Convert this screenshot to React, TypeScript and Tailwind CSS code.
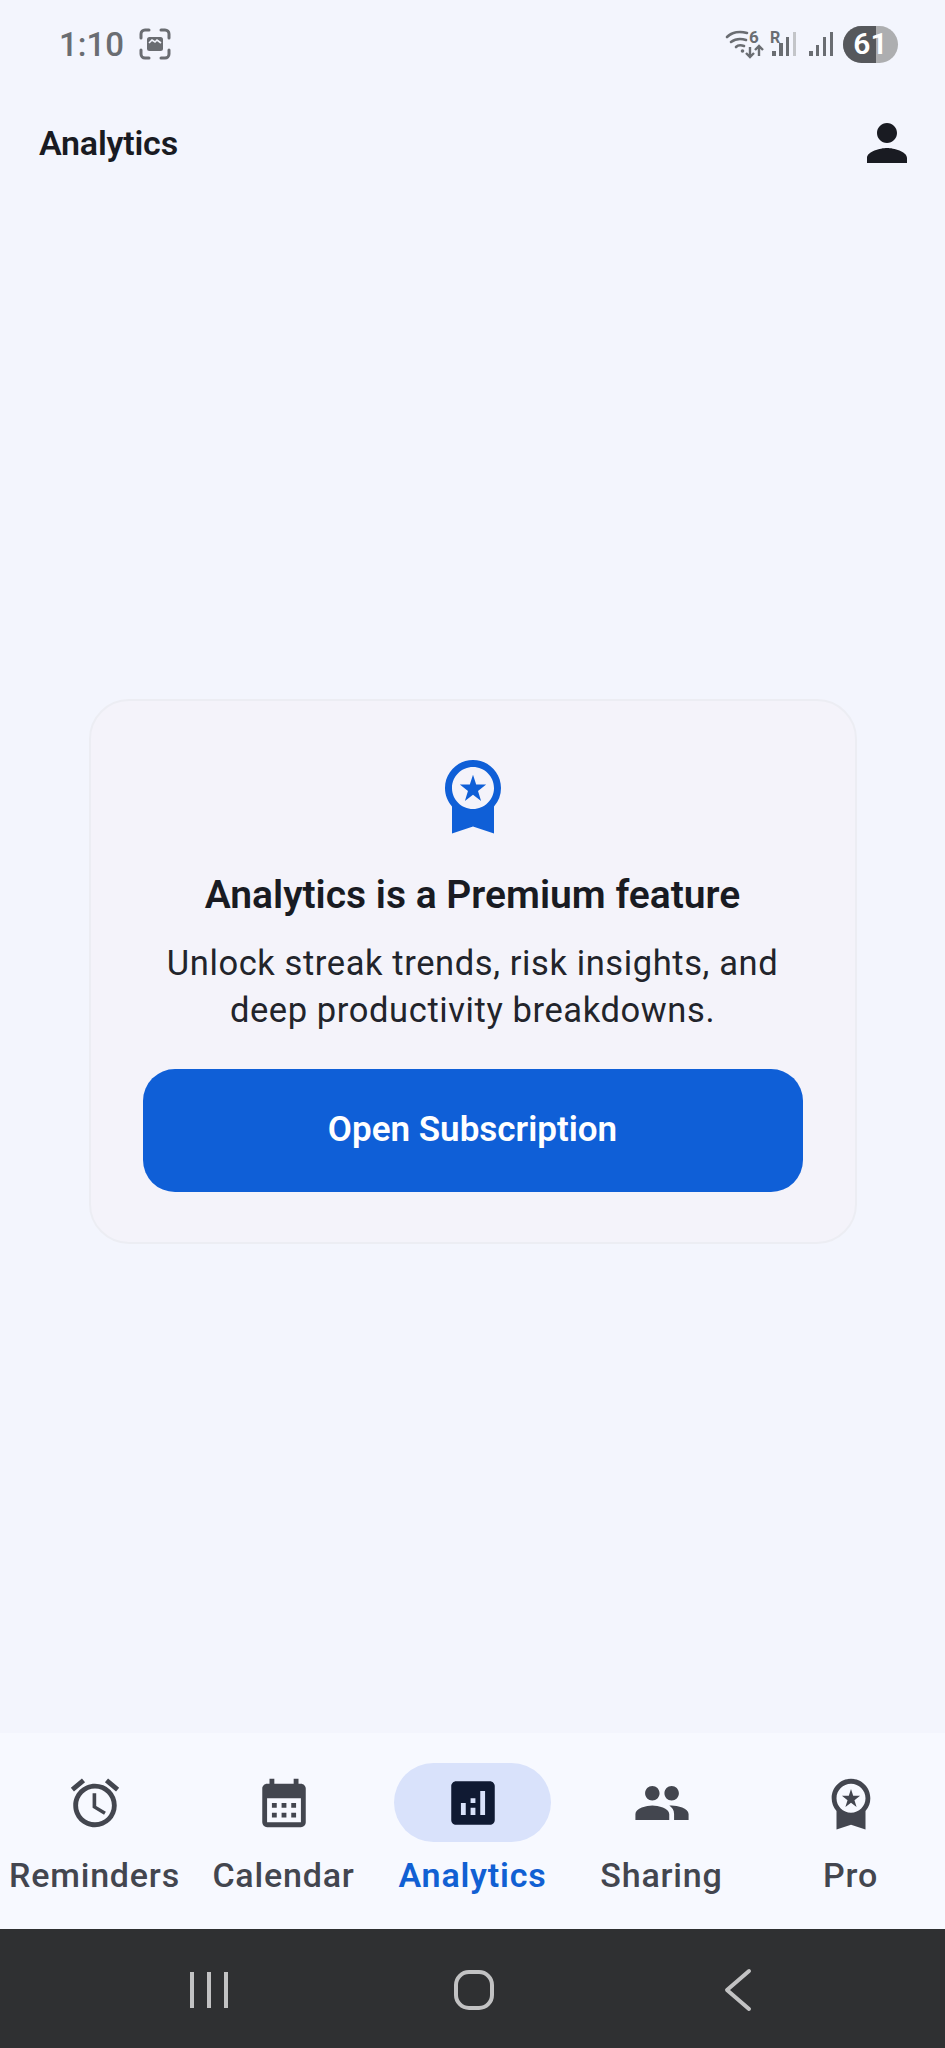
import { MdAccessAlarm, MdAnalytics, MdCalendarMonth, MdPeople, MdPerson, MdWorkspacePremium } from 'react-icons/md';
import type { IconType } from 'react-icons';

interface NavItemProps {
  label: string;
  icon: IconType;
  active?: boolean;
}

function NavItem({ label, icon: Icon, active }: NavItemProps) {
  return (
    <div className="flex flex-col items-center">
      <div className={`flex h-[79px] w-[157px] items-center justify-center rounded-full ${active ? 'bg-[#d9e2fb]' : ''}`}>
        <Icon className={`h-[58px] w-[58px] ${active ? 'text-[#101a33]' : 'text-[#43464f]'}`} />
      </div>
      <span
        className={`mt-[9px] whitespace-nowrap text-[34px] leading-[48px] tracking-[0.8px] ${
          active ? 'font-semibold text-[#1160d3]' : 'font-medium text-[#43464f]'
        }`}
      >
        {label}
      </span>
    </div>
  );
}

function ScreenshotIcon() {
  return (
    <svg width="32" height="32" viewBox="0 0 32 32" fill="none" className="text-[#6a6d72]">
      <path
        d="M2 10V6a4 4 0 0 1 4-4h4M22 2h4a4 4 0 0 1 4 4v4M30 22v4a4 4 0 0 1-4 4h-4M10 30H6a4 4 0 0 1-4-4v-4"
        stroke="currentColor"
        strokeWidth="3"
        strokeLinecap="round"
      />
      <rect x="8" y="9" width="16" height="14" rx="2.5" fill="currentColor" />
      <path d="M10 15l3-3 3 2 2-2 4 3" stroke="#f3f5fd" strokeWidth="1.6" fill="none" />
    </svg>
  );
}

function StatusIcons() {
  return (
    <div className="flex items-center">
      <svg width="115" height="48" viewBox="0 0 115 48" fill="none" className="text-[#6a6d72]">
        <path d="M5 17C10 12 18 11 25 13M9 22C13 19 18 18 24 20M14 27C16 25 19 25 22 26" stroke="currentColor" strokeWidth="2.6" strokeLinecap="round" />
        <circle cx="20.5" cy="31" r="1.8" fill="currentColor" />
        <text x="27" y="23" fontSize="17" fontWeight="700" fill="currentColor">6</text>
        <path d="M28 27v10M24 33l4 4 4-4M37 36V26M33 30l4-4 4 4" stroke="currentColor" strokeWidth="2.4" />
        <text x="48" y="23" fontSize="16" fontWeight="700" fill="currentColor">R</text>
        <rect x="50" y="31" width="4" height="5" fill="currentColor" />
        <rect x="57" y="23" width="4" height="13" fill="currentColor" />
        <rect x="64" y="17" width="3" height="19" fill="currentColor" />
        <rect x="71" y="12" width="3" height="24" fill="#c3c5c9" />
        <rect x="87" y="31" width="4" height="5" fill="currentColor" />
        <rect x="94" y="25" width="3" height="11" fill="currentColor" />
        <rect x="101" y="17" width="3" height="19" fill="currentColor" />
        <rect x="108" y="12" width="3" height="24" fill="currentColor" />
      </svg>
      <div className="relative ml-[6px] flex h-[37px] w-[55px] items-center justify-center overflow-hidden rounded-full bg-[#adaeb0]">
        <div className="absolute inset-y-0 left-0 w-[33px] bg-[#56585c]" />
        <span className="relative text-[30px] font-semibold leading-none text-white">61</span>
      </div>
    </div>
  );
}

export default function App() {
  return (
    <div className="flex h-[2048px] w-[945px] flex-col bg-[#f3f5fd] font-['Roboto',sans-serif]">
      <div className="flex h-[88px] shrink-0 items-center justify-between pl-[59px] pr-[47px]">
        <div className="flex items-center gap-[15px]">
          <span className="text-[33px] font-medium leading-none text-[#6a6d72]">1:10</span>
          <ScreenshotIcon />
        </div>
        <StatusIcons />
      </div>

      <div className="flex h-[121px] shrink-0 items-start justify-between pl-[39px] pr-[28px]">
        <h1 className="text-[34px] font-semibold leading-[110px] tracking-[-0.2px] text-[#191b22]">Analytics</h1>
        <div className="flex h-[110px] items-center">
          <MdPerson className="h-[60px] w-[60px] text-[#191b22]" />
        </div>
      </div>

      <main className="flex flex-1 items-center justify-center">
        <div className="flex h-[545px] w-[768px] flex-col items-center rounded-[40px] border-2 border-[#ecedf3] bg-[#f4f3fa] px-[52px]">
          <MdWorkspacePremium className="mt-[52px] h-[84px] w-[84px] shrink-0 text-[#0f5fd7]" />
          <h2 className="mt-[33px] text-[39px] font-semibold leading-[50px] text-[#191b22]">Analytics is a Premium feature</h2>
          <p className="mt-[20px] text-center text-[34.5px] leading-[47px] tracking-[0.6px] text-[#22242b]">
            Unlock streak trends, risk insights, and
            <br />
            deep productivity breakdowns.
          </p>
          <button
            type="button"
            className="mt-[35px] h-[123px] w-[660px] shrink-0 rounded-[32px] bg-[#0f5fd7] text-[35px] font-semibold text-white"
          >
            Open Subscription
          </button>
        </div>
      </main>

      <nav className="grid h-[196px] shrink-0 grid-cols-5 bg-[#f7f9ff] pt-[30px]">
        <NavItem label="Reminders" icon={MdAccessAlarm} />
        <NavItem label="Calendar" icon={MdCalendarMonth} />
        <NavItem label="Analytics" icon={MdAnalytics} active />
        <NavItem label="Sharing" icon={MdPeople} />
        <NavItem label="Pro" icon={MdWorkspacePremium} />
      </nav>

      <div className="h-[119px] shrink-0 bg-[#2f3032]">
        <svg width="945" height="119" viewBox="0 0 945 119" fill="none" stroke="#c2c2c3" strokeWidth="4">
          <path d="M192 43v36M209 43v36M226 43v36" strokeWidth="4" />
          <rect x="456" y="43" width="36" height="36" rx="13" />
          <path d="M749 42L727 61l22 19" strokeLinecap="round" strokeLinejoin="round" />
        </svg>
      </div>
    </div>
  );
}
